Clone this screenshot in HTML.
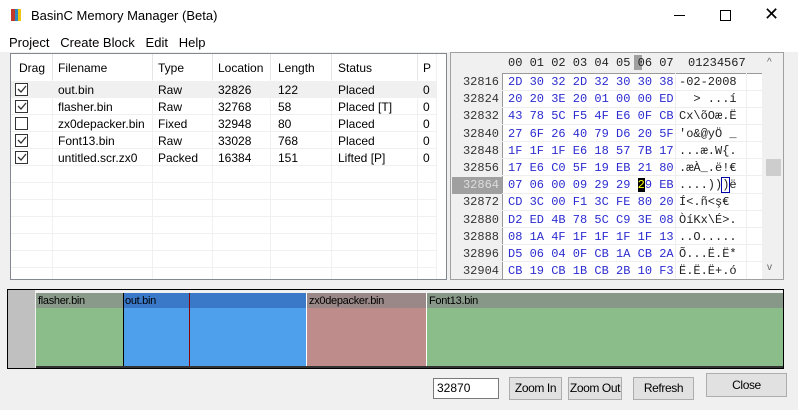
<!DOCTYPE html>
<html><head><style>
*{margin:0;padding:0;box-sizing:border-box}
body{width:798px;height:410px;background:#f0f0f0;font-family:"Liberation Sans",sans-serif;font-size:12px;color:#000;position:relative;overflow:hidden}
.a{position:absolute;white-space:nowrap}
.mono{font-family:"Liberation Mono",monospace;font-size:12px}
.btn{position:absolute;background:#e1e1e1;border:1px solid #adadad;text-align:center;font-size:12px;white-space:nowrap;letter-spacing:-0.4px;overflow:hidden}
</style></head><body>
<div class="a" style="left:0;top:0;width:798px;height:52px;background:#fff"></div>
<div class="a" style="left:11px;top:9px;width:4px;height:12px;background:#c0392b"></div>
<div class="a" style="left:15px;top:9px;width:3px;height:12px;background:#2e86c1"></div>
<div class="a" style="left:18px;top:9px;width:3px;height:12px;background:#f1c40f"></div>
<div class="a" style="left:31px;top:8px;font-size:13px">BasinC Memory Manager (Beta)</div>
<div class="a" style="left:674px;top:15px;width:11px;height:1px;background:#000"></div>
<div class="a" style="left:720px;top:10px;width:11px;height:11px;border:1px solid #000"></div>
<div class="a" style="left:764px;top:4px;font-size:18px;font-weight:300">✕</div>
<div class="a" style="left:9px;top:35px;font-size:13px">Project&nbsp;&nbsp;&nbsp;Create Block&nbsp;&nbsp;&nbsp;Edit&nbsp;&nbsp;&nbsp;Help</div>

<!-- list -->
<div class="a" style="left:10px;top:53px;width:437px;height:227px;background:#fff;border:1px solid #828790"></div>
<div class="a" style="left:11px;top:81px;width:425px;height:17px;background:#f0f0f0"></div>
<svg class="a" style="left:11px;top:54px" width="426" height="225">
<g stroke="#f0f0f0">
<line x1="41.5" y1="0" x2="41.5" y2="225"/><line x1="141.5" y1="0" x2="141.5" y2="225"/><line x1="201.5" y1="0" x2="201.5" y2="225"/><line x1="259.5" y1="0" x2="259.5" y2="225"/><line x1="320.5" y1="0" x2="320.5" y2="225"/><line x1="406.5" y1="0" x2="406.5" y2="225"/><line x1="425.5" y1="0" x2="425.5" y2="225"/>
<line x1="0" y1="60.5" x2="426" y2="60.5"/><line x1="0" y1="77.5" x2="426" y2="77.5"/><line x1="0" y1="94.5" x2="426" y2="94.5"/><line x1="0" y1="111.5" x2="426" y2="111.5"/><line x1="0" y1="128.5" x2="426" y2="128.5"/><line x1="0" y1="145.5" x2="426" y2="145.5"/><line x1="0" y1="162.5" x2="426" y2="162.5"/><line x1="0" y1="179.5" x2="426" y2="179.5"/><line x1="0" y1="196.5" x2="426" y2="196.5"/><line x1="0" y1="213.5" x2="426" y2="213.5"/>
</g>
<g stroke="#e5e5e5"><line x1="41.5" y1="0" x2="41.5" y2="26"/><line x1="141.5" y1="0" x2="141.5" y2="26"/><line x1="201.5" y1="0" x2="201.5" y2="26"/><line x1="259.5" y1="0" x2="259.5" y2="26"/><line x1="320.5" y1="0" x2="320.5" y2="26"/><line x1="406.5" y1="0" x2="406.5" y2="26"/></g>
<g fill="#fff" stroke="#333"><rect x="4.5" y="29.5" width="12" height="12"/><rect x="4.5" y="46.5" width="12" height="12"/><rect x="4.5" y="63.5" width="12" height="12"/><rect x="4.5" y="80.5" width="12" height="12"/><rect x="4.5" y="97.5" width="12" height="12"/></g>
<g fill="none" stroke="#333" stroke-width="1.3"><path d="M7 35l3 3 5-6"/><path d="M7 52l3 3 5-6"/><path d="M7 86l3 3 5-6"/><path d="M7 103l3 3 5-6"/></g>
</svg>
<div class="a" style="left:19px;top:61px">Drag</div>
<div class="a" style="left:58px;top:61px">Filename</div>
<div class="a" style="left:158px;top:61px">Type</div>
<div class="a" style="left:218px;top:61px">Location</div>
<div class="a" style="left:278px;top:61px">Length</div>
<div class="a" style="left:338px;top:61px">Status</div>
<div class="a" style="left:423px;top:61px">P</div>
<div class="a" style="left:58px;top:82px;line-height:17px">out.bin<br>flasher.bin<br>zx0depacker.bin<br>Font13.bin<br>untitled.scr.zx0</div>
<div class="a" style="left:158px;top:82px;line-height:17px">Raw<br>Raw<br>Fixed<br>Raw<br>Packed</div>
<div class="a" style="left:218px;top:82px;line-height:17px">32826<br>32768<br>32948<br>33028<br>16384</div>
<div class="a" style="left:278px;top:82px;line-height:17px">122<br>58<br>80<br>768<br>151</div>
<div class="a" style="left:338px;top:82px;line-height:17px">Placed<br>Placed [T]<br>Placed<br>Placed<br>Lifted [P]</div>
<div class="a" style="left:423px;top:82px;line-height:17px">0<br>0<br>0<br>0<br>0</div>

<!-- hex -->
<div class="a" style="left:450px;top:52px;width:334px;height:228px;border:1px solid #a0a0a0;background:#f0f0f0"></div>
<div class="a" style="left:502px;top:73px;width:260px;height:206px;background:#fff;border-left:1px solid #999;border-top:1px solid #999"></div>
<svg class="a" style="left:502px;top:73px" width="260" height="206"><g stroke="#eee">
<line x1="0" y1="17.5" x2="260" y2="17.5"/><line x1="0" y1="34.5" x2="260" y2="34.5"/><line x1="0" y1="51.5" x2="260" y2="51.5"/><line x1="0" y1="68.5" x2="260" y2="68.5"/><line x1="0" y1="85.5" x2="260" y2="85.5"/><line x1="0" y1="102.5" x2="260" y2="102.5"/><line x1="0" y1="120.5" x2="260" y2="120.5"/><line x1="0" y1="137.5" x2="260" y2="137.5"/><line x1="0" y1="154.5" x2="260" y2="154.5"/><line x1="0" y1="171.5" x2="260" y2="171.5"/><line x1="0" y1="188.5" x2="260" y2="188.5"/>
<line x1="173.5" y1="0" x2="173.5" y2="206"/><line x1="244.5" y1="0" x2="244.5" y2="206"/></g></svg>
<div class="a" style="left:452px;top:177px;width:50px;height:17px;background:#a0a0a0"></div>
<div class="a" style="left:634px;top:55px;width:8px;height:15px;background:#a0a0a0"></div>
<div class="a mono" style="left:508px;top:56px;color:#222">00 01 02 03 04 05 06 07&nbsp;&nbsp;01234567</div>
<div class="a mono" style="left:454px;top:74px;line-height:17.2px;color:#333;text-align:right;width:45px">32816<br>32824<br>32832<br>32840<br>32848<br>32856<br><span style="color:#ddd">32864</span><br>32872<br>32880<br>32888<br>32896<br>32904</div>
<div class="a mono" style="left:508px;top:74px;line-height:17.2px;color:#2b2bd0">2D 30 32 2D 32 30 30 38<br>20 20 3E 20 01 00 00 ED<br>43 78 5C F5 4F E6 0F CB<br>27 6F 26 40 79 D6 20 5F<br>1F 1F 1F E6 18 57 7B 17<br>17 E6 C0 5F 19 EB 21 80<br>07 06 00 09 29 29 <span style="background:#000;color:#ff0">2</span>9 EB<br>CD 3C 00 F1 3C FE 80 20<br>D2 ED 4B 78 5C C9 3E 08<br>08 1A 4F 1F 1F 1F 1F 13<br>D5 06 04 0F CB 1A CB 2A<br>CB 19 CB 1B CB 2B 10 F3</div>
<div class="a mono" style="left:679px;top:74px;line-height:17.2px;color:#222;white-space:pre">-02-2008
  > ...í
Cx\õOæ.Ë
'o&amp;@yÖ _
...æ.W{.
.æÀ_.ë!€
....))<span style="outline:1px solid #00a">)</span>ë
Í&lt;.ñ&lt;ş€
ÒíKx\É&gt;.
..O.....
Õ...Ë.Ë*
Ë.Ë.Ë+.ó</div>
<div class="a" style="left:763px;top:53px;width:20px;height:226px;background:#f0f0f0"></div>
<div class="a" style="left:767px;top:57px;font-size:10px;color:#666">^</div>
<div class="a" style="left:766px;top:159px;width:15px;height:17px;background:#cdcdcd"></div>
<div class="a" style="left:767px;top:262px;font-size:10px;color:#666">v</div>

<!-- map -->
<div class="a" style="left:7px;top:289px;width:777px;height:80px;border:1px solid #000;background:#c0c0c0"></div>
<div class="a" style="left:35px;top:290px;width:748px;height:78px;background:#f0f0f0"></div>
<div class="a" style="left:36px;top:293px;width:87px;height:73px;background:#8bbd8b"></div>
<div class="a" style="left:36px;top:293px;width:87px;height:15px;background:#8a9a8a"></div>
<div class="a" style="left:123px;top:293px;width:183px;height:73px;background:#4ea0ec;border-left:1px solid #000"></div>
<div class="a" style="left:124px;top:293px;width:182px;height:15px;background:#3a78c8"></div>
<div class="a" style="left:189px;top:293px;width:1px;height:73px;background:#8b0000"></div>
<div class="a" style="left:306px;top:293px;width:120px;height:73px;background:#bf8c8c;border-left:1px solid #fff"></div>
<div class="a" style="left:307px;top:293px;width:119px;height:15px;background:#9a8888"></div>
<div class="a" style="left:426px;top:293px;width:357px;height:73px;background:#8bbd8b;border-left:1px solid #fff"></div>
<div class="a" style="left:427px;top:293px;width:356px;height:15px;background:#889888"></div>
<div class="a" style="left:36px;top:366px;width:747px;height:2px;background:#333"></div>
<div class="a" style="left:38px;top:295px;font-size:11px;letter-spacing:-0.3px">flasher.bin</div>
<div class="a" style="left:125px;top:295px;font-size:11px;letter-spacing:-0.3px">out.bin</div>
<div class="a" style="left:309px;top:295px;font-size:11px;letter-spacing:-0.3px">zx0depacker.bin</div>
<div class="a" style="left:429px;top:295px;font-size:11px;letter-spacing:-0.3px">Font13.bin</div>

<div class="a" style="left:433px;top:378px;width:66px;height:21px;background:#fff;border:1px solid #7a7a7a;padding:2px 3px">32870</div>
<div class="btn" style="left:509px;top:377px;width:53px;height:23px;line-height:21px">Zoom In</div>
<div class="btn" style="left:568px;top:377px;width:54px;height:23px;line-height:21px">Zoom Out</div>
<div class="btn" style="left:633px;top:377px;width:61px;height:23px;line-height:21px">Refresh</div>
<div class="btn" style="left:706px;top:373px;width:81px;height:24px;line-height:22px">Close</div>
</body></html>
